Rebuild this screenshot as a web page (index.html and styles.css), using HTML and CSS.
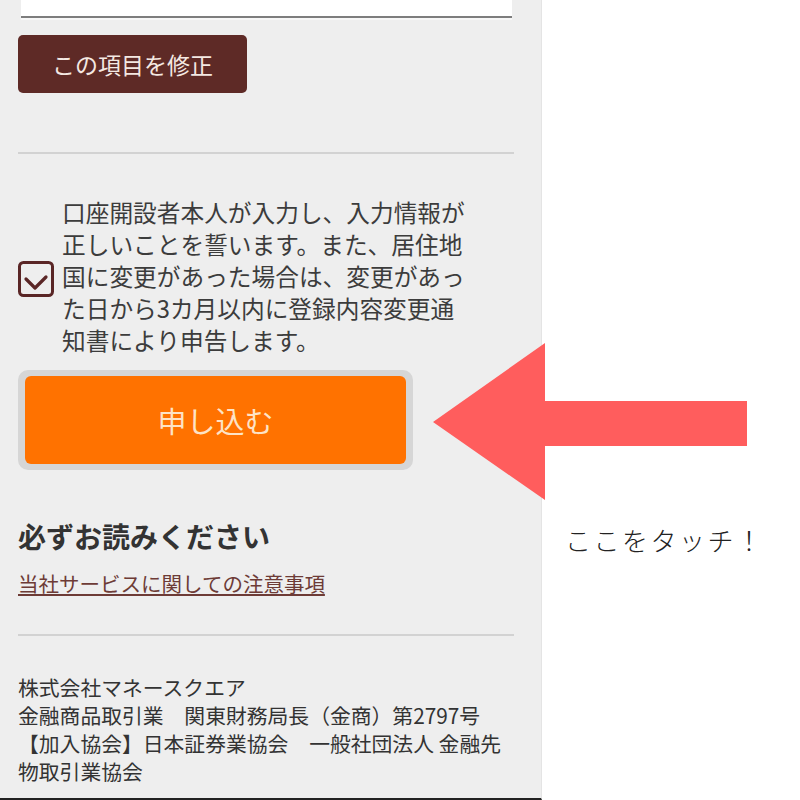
FILE: index.html
```html
<!DOCTYPE html>
<html lang="ja">
  <head>
    <meta charset="UTF-8" />
    <meta name="viewport" content="width=device-width, initial-scale=1.0" />
    <title>申し込み確認</title>
    <link rel="stylesheet" href="styles.css">
  </head>
  <body>
    <div class="page">
      <div class="panel">
        <div class="field"></div>
        <button class="edit-btn">この項目を修正</button>

        <hr class="sep" />

        <label class="agree">
          <span class="checkbox">
            <svg width="36" height="36" viewBox="0 0 36 36">
              <rect x="1.5" y="1.5" width="33" height="33" rx="4" fill="none" stroke="#5a2626" stroke-width="3" />
              <polyline points="8,18 17,27 28,16" fill="none" stroke="#5a2626" stroke-width="3.2" stroke-linecap="round" stroke-linejoin="round" />
            </svg>
          </span>
          <span class="agree-text">口座開設者本人が入力し、入力情報が正しいことを誓います。また、居住地国に変更があった場合は、変更があった日から3カ月以内に登録内容変更通知書により申告します。</span>
        </label>

        <div class="submit-wrap">
          <button class="submit-btn">申し込む</button>
        </div>

        <h2 class="notice-title">必ずお読みください</h2>
        <a class="notice-link" href="#">当社サービスに関しての注意事項</a>

        <hr class="sep sep-bottom" />

        <div class="company">
          株式会社マネースクエア<br />
          金融商品取引業　関東財務局長（金商）第2797号<br />
          【加入協会】日本証券業協会　一般社団法人 金融先物取引業協会
        </div>
      </div>

      <div class="side">
        <!-- 注釈の矢印 -->
        <svg class="arrow" width="330" height="170" viewBox="0 0 330 170">
          <polygon points="0,79 112,0 112,58 314,58 314,103 112,103 112,157" fill="#ff5d5d" />
        </svg>
        <p class="touch">ここをタッチ！</p>
      </div>
    </div>
  </body>
</html>
```

FILE: styles.css
```css
body {
  margin: 0;
  background-color: white;
  color: #333;
  font-family: "Noto Sans CJK JP", "Noto Sans", sans-serif;
}
.page {
  display: flex;
  height: 800px;
  overflow: hidden;
}
.panel {
  box-sizing: border-box;
  width: 542px;
  height: 800px;
  flex-shrink: 0;
  padding: 0 27px 0 18px;
  background-color: #eeeeee;
  border-right: 1px solid #e4e4e4;
  border-bottom: 2px solid #222;
}
.field {
  height: 16px;
  margin: 0 2px 0 3px;
  background-color: white;
  border-bottom: 2px solid #7d7d7d;
  box-shadow: 0 2px 0 #f7f7f7;
}
.edit-btn {
  display: block;
  width: 229px;
  height: 58px;
  margin-top: 17px;
  border: none;
  border-radius: 5px;
  background-color: #5e2a26;
  color: #f4e8e2;
  font-family: inherit;
  font-size: 23px;
  cursor: pointer;
}
.sep {
  height: 0;
  margin: 59px 0 0 0;
  border: none;
  border-top: 2px solid #d2d2d2;
}
.agree {
  display: flex;
  align-items: center;
  gap: 8px;
  margin-top: 42px;
}
.checkbox {
  display: flex;
  flex-shrink: 0;
  margin-top: 6px;
}
.agree-text {
  width: 414px;
  font-size: 23.7px;
  line-height: 32px;
  color: #3c3c3c;
}
.submit-wrap {
  width: 381px;
  margin-top: 14px;
  padding: 6px 7px 6px 7px;
  border-radius: 10px;
  background-color: #d6d6d6;
}
.submit-btn {
  display: block;
  width: 100%;
  height: 88px;
  border: none;
  border-radius: 6px;
  background-color: #ff7200;
  color: #fde3c6;
  font-family: inherit;
  font-size: 29px;
  cursor: pointer;
}
.notice-title {
  margin: 48px 0 0 0;
  font-size: 28px;
  line-height: 36px;
  font-weight: bold;
  color: #333;
}
.notice-link {
  display: inline-block;
  margin-top: 14px;
  font-size: 20.5px;
  line-height: 30px;
  color: #6d3b36;
  text-decoration: underline;
}
.sep-bottom {
  margin-top: 36px;
}
.company {
  margin-top: 37px;
  font-size: 20.8px;
  line-height: 28px;
  color: #333;
}
.side {
  position: relative;
  flex: 1;
}
.arrow {
  position: absolute;
  left: -109px;
  top: 343px;
}
.touch {
  position: absolute;
  left: 23px;
  top: 521px;
  margin: 0;
  font-size: 26px;
  font-weight: 300;
  letter-spacing: 2.5px;
  color: #222;
}
```
